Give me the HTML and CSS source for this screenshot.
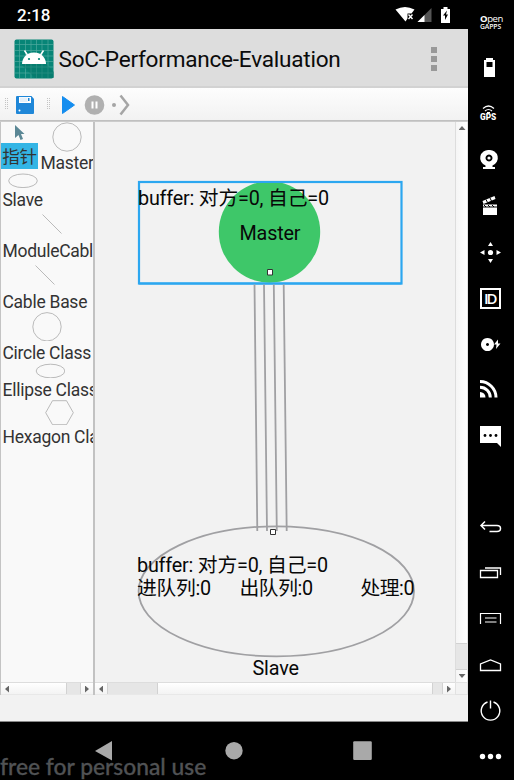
FILE: index.html
```html
<!DOCTYPE html>
<html lang="zh-CN">
<head>
<meta charset="utf-8">
<title>SoC-Performance-Evaluation</title>
<link rel="stylesheet" href="styles.css">
</head>
<body>
<div class="emulator">
  <div class="screen">
    <div class="status">
      <span class="clock">2:18</span>
      <svg class="status-icons" width="60" height="20" viewBox="394 5 60 20">
        <path d="M395.500 9.500q9.500-5 19 0l-3 4h-4v5l-2 3z" fill="#fff"/>
        <path d="M408.500 14.500l4 4.500m0-4.500l-4 4.500" stroke="#fff" stroke-width="1.400"/>
        <path d="M431.500 8v14h-14z" fill="#555"/>
        <path d="M424.500 15v7h-7z" fill="#fff"/>
        <path d="M441 9h2.500V7h4v2h2.500v14h-9z" fill="#fff"/>
        <path d="M447 10.500l-4 5h2v4.500l3-5.500h-2z" fill="#000"/>
      </svg>
    </div>

    <header class="appbar">
      <svg class="app-icon" width="40" height="40" viewBox="0 0 40 40">
        <rect x=".5" y=".5" width="39" height="39" rx="2" fill="#078577"/>
        <path d="M5.500 1v38M11.500 1v38M17 1v38M22.500 1v38M28 1v38M34 1v38M1 5.500h38M1 11.500h38M1 17h38M1 22.500h38M1 28h38M1 34h38" stroke="#4fa99e" stroke-width=".7"/>
        <path d="M8 26L13 18l19 6v1l8 8v6H21z" fill="#067568" opacity=".5"/>
        <path d="M8 25c0-5.500 4-11.500 12-11.500S32 19.500 32 25z" fill="#fff"/>
        <path d="M13.500 16l-3-4.500m16 4.500l3-4.500" stroke="#fff" stroke-width="1.500"/>
        <circle cx="15" cy="20" r="1.100" fill="#078577"/><circle cx="25" cy="20" r="1.100" fill="#078577"/>
      </svg>
      <h1 class="title">SoC-Performance-Evaluation</h1>
      <div class="overflow"><i></i><i></i><i></i></div>
    </header>

    <div class="toolbar">
      <svg width="140" height="32" viewBox="0 89 140 32">
        <path d="M5.500 99v11M7.500 99v11M47.500 99v11M49.500 99v11" stroke="#c4c4c4" stroke-dasharray="1 1"/>
        <path d="M17 97h14.500l2.500 3v14a1 1 0 0 1-1 1H17a1 1 0 0 1-1-1V98a1 1 0 0 1 1-1z" fill="#1f87d8"/>
        <path d="M19 98h12v6H19z" fill="#fff"/><path d="M20 98.500h7.500V103H20z" fill="#e4f0fa"/><path d="M28 99h1.500v3H28z" fill="#1f87d8"/>
        <circle cx="19.500" cy="111.500" r="1" fill="#fff"/>
        <path d="M62.500 97.500l12 8.500-12 8.500z" fill="#148def" stroke="#148def" stroke-linejoin="round"/>
        <circle cx="94.500" cy="106" r="9.800" fill="#b0b0b0"/>
        <path d="M92.500 102.500v7M96.500 102.500v7" stroke="#fff" stroke-width="2"/>
        <circle cx="114" cy="106" r="2" fill="#a5a5a5"/>
        <path d="M120.500 96.500l7.500 9.500-7.500 9.500" fill="none" stroke="#a5a5a5" stroke-width="2.500"/>
      </svg>
    </div>

    <main class="workspace">
      <section class="palette">
        <div class="items">
          <div class="row">
            <div class="item pointer">
              <svg width="12" height="17" viewBox="0 0 12 17"><path d="M1 1l9.500 9H7l2 5-2.500 1-2-5L1 14z" fill="#5b8795"/></svg>
              <span class="label selected">指针</span>
            </div>
            <div class="item master">
              <svg width="30" height="30" viewBox="0 0 30 30"><circle cx="15" cy="15" r="14.200"/></svg>
              <span class="label">Master</span>
            </div>
          </div>
          <div class="item"><svg width="30" height="15" viewBox="0 0 30 15"><ellipse cx="15" cy="7.800" rx="14.300" ry="6.800"/></svg><span class="label">Slave</span></div>
          <div class="item"><svg width="30" height="29" viewBox="0 0 30 29"><path d="M5.500 4.500l19 19"/></svg><span class="label">ModuleCable</span></div>
          <div class="item"><svg width="30" height="29" viewBox="0 0 30 29"><path d="M5.500 4.500l19 19"/></svg><span class="label">Cable Base</span></div>
          <div class="item"><svg width="30" height="29" viewBox="0 0 30 29"><circle cx="15" cy="14.800" r="14.200"/></svg><span class="label">Circle Class</span></div>
          <div class="item"><svg width="30" height="15" viewBox="0 0 30 15"><ellipse cx="15.500" cy="8" rx="14.300" ry="6.800"/></svg><span class="label">Ellipse Class</span></div>
          <div class="item"><svg width="30" height="25" viewBox="0 0 30 25"><path d="M1.700 12.700L8.500 .700h14l6.800 12-6.800 12H8.500z"/></svg><span class="label">Hexagon Class</span></div>
        </div>
        <div class="hbar">
          <span class="arrow left"></span><span class="track"></span><span class="thumb small"></span><span class="arrow right"></span>
        </div>
      </section>

      <section class="editor">
        <svg class="diagram" width="360" height="560" viewBox="95 122 360 560">
          <rect x="139" y="182" width="262.500" height="101.500" fill="none" stroke="#2ca7f0" stroke-width="2.200"/>
          <circle cx="269.500" cy="232" r="50.700" fill="#3ec769"/>
          <path d="M139 283.500h262.500M139 182h262.500" stroke="#2ca7f0" stroke-width="2.200"/>
          <g stroke="#a0a0a3" stroke-width="1.800" fill="none">
            <path d="M254.500 284.500L257.300 531M264 284.500l3 246.500M273.800 284.500l3 246.500M283.700 284.500l3 246.500"/>
            <ellipse cx="276.300" cy="591.300" rx="137.700" ry="65"/>
          </g>
          <path d="M267.500 269.500h5v5.500h-5zM270.500 529.500h5v5h-5z" fill="#fff" stroke="#333"/>
          <text x="138" y="204.500" textLength="191">buffer: 对方=0, 自己=0</text>
          <text x="239.500" y="240" textLength="61">Master</text>
          <text x="137" y="572" textLength="191">buffer: 对方=0, 自己=0</text>
          <text x="137" y="595" textLength="74">进队列:0</text>
          <text x="239.500" y="595" textLength="73.500">出队列:0</text>
          <text x="360.500" y="595" textLength="54">处理:0</text>
          <text x="252.500" y="675" textLength="46.500">Slave</text>
        </svg>
        <div class="vbar">
          <span class="arrow up"></span><span class="track"></span><span class="thumb"></span><span class="arrow down"></span>
        </div>
        <div class="hbar">
          <span class="arrow left"></span><span class="thumb wide"></span><span class="track"></span><span class="thumb tiny"></span><span class="arrow right"></span>
        </div>
        <div class="corner"></div>
      </section>
    </main>

    <div class="footer"></div>

    <nav class="navbar">
      <svg width="468" height="58" viewBox="0 722 468 58">
        <path d="M112 741v19.500L95 751z" fill="#a9a9a9"/>
        <circle cx="234" cy="750.700" r="8.700" fill="#a9a9a9"/>
        <rect x="353.200" y="741.300" width="18.600" height="18.600" rx="1.200" fill="#a9a9a9"/>
      </svg>
      <span class="watermark">free for personal use</span>
    </nav>
  </div>

  <aside class="side">
    <svg width="46" height="780" viewBox="468 0 46 780">
      <g fill="#fff">
        <text class="open" x="480" y="22"><tspan font-weight="700">O</tspan>pen</text>
        <text class="gapps" x="480" y="29">GAPPS</text>
        <path d="M484 60h2v-2h7v2h2v17h-11zM486.500 62v5h6v-5z" fill-rule="evenodd"/>
        <text class="gps" x="480" y="120">GPS</text>
        <path d="M489 150a8 8 0 0 1 3.500 15.500v1.500h2.500v2h-12v-2h2.500v-1.500A8 8 0 0 1 489 150zm0 4.500a3.500 3.500 0 1 0 .01 0z" fill-rule="evenodd"/>
        <circle cx="489" cy="158" r="1.600"/>
        <path d="M483 204.500h14V215h-14zM482.500 201l12-5 1 3-12 5z"/>
        <circle cx="490.500" cy="252.500" r="2.600"/>
        <path d="M490.500 242l2.500 4h-5zM490.500 263l2.500-4h-5zM480 252.500l4.500-2.500v5zM501 252.500l-4.500-2.500v5z"/>
        <text class="id" x="484" y="303.500">ID</text>
        <path d="M487.500 338a6.500 6.500 0 1 1-.01 0zm0 5a1.500 1.500 0 1 0 .01 0z" fill-rule="evenodd"/>
        <path d="M498 339.500l-4 5h2.500l-.5 4.500 4.500-5.500H498z"/>
        <path d="M480 392a5.500 5.500 0 0 1 5.500 5.500H480z"/>
        <path d="M480 426h21v21l-4-4h-17z"/>
        <circle cx="482.500" cy="756.500" r="2.700"/><circle cx="490.500" cy="756.500" r="2.700"/><circle cx="498.500" cy="756.500" r="2.700"/>
      </g>
      <g fill="#000">
        <circle cx="485" cy="435.500" r="1.400"/><circle cx="490.500" cy="435.500" r="1.400"/><circle cx="496" cy="435.500" r="1.400"/>
        <path d="M483 206.500h14v1h-14z"/>
      </g>
      <path d="M484 205l2 2m2-2l2 2m2-2l2 2M486 199.500l1.500 3M490 198l1.500 3" stroke="#000" fill="none"/>
      <g fill="none" stroke="#fff">
        <path d="M483 108.500q5.500-5 11 0M485 111q3.500-3 7 0" stroke-width="1.200"/><path d="M487 112.500h3"/>
        <rect x="481" y="289" width="19" height="19" stroke-width="2"/>
        <path d="M480 387.200a10.300 10.300 0 0 1 10.300 10.300M480 381.500a16 16 0 0 1 16 16" stroke-width="3"/>
        <path d="M485 521.500l-4 4 4 4M481 525.500h16q3.500 0 3.500 3t-3.500 3h-7.500" stroke-width="1.500"/>
        <path d="M480.500 570.500h17v7h-17zM485 568h15.500v7" stroke-width="1.300"/>
        <path d="M480.500 624v-10.500h20V624M485 618h11.500M485 622h11.500" stroke-width="1.200"/>
        <path d="M480.500 670.500v-6.500l10-4 10 4v6.500z" stroke-width="1.300"/>
        <path d="M487.500 702a9.300 9.300 0 1 0 6 0M490.500 700.500v8" stroke-width="1.400"/>
      </g>
    </svg>
  </aside>
</div>
</body>
</html>
```
FILE: styles.css
```css
* { box-sizing: border-box; }

body {
  margin: 0;
  background: #000;
  font-family: Roboto, "Noto Sans CJK SC", sans-serif;
}

svg { display: block; flex: none; }

.emulator {
  display: grid;
  grid-template-columns: 468px 46px;
  width: 514px;
  height: 780px;
  overflow: hidden;
}

.screen {
  display: grid;
  grid-template-rows: 29px 59px 33px 574px 27px 58px;
  min-width: 0;
}

.status {
  display: flex;
  align-items: center;
  justify-content: space-between;
  padding: 1px 14px 0 17px;
  color: #fff;
  background: #000;
}
.clock { font-size: 17px; font-weight: 500; line-height: 20px; }

.appbar {
  display: flex;
  align-items: center;
  padding: 0 31px 0 14px;
  background: #ddd;
  border-bottom: 2px solid #d2d2d2;
}
.app-icon { margin-top: 2px; }
.title {
  flex: 1;
  margin: 4px 0 0 4.5px;
  font-size: 22.6px;
  font-weight: 400;
  line-height: 28px;
  letter-spacing: -.24px;
  white-space: nowrap;
  color: #0b0b0b;
}
.overflow { display: grid; gap: 3px; margin-top: 2px; }
.overflow i { width: 6px; height: 6px; background: #999; }

.toolbar {
  background: linear-gradient(#fdfdfd, #f2f2f2);
  border-bottom: 1px solid #c0c0c0;
}

.workspace {
  display: grid;
  grid-template-columns: 95px 373px;
  border-top: 1px solid #ccc;
  background: #f2f2f2;
}

.palette {
  display: grid;
  grid-template-rows: 560px 13px;
  min-width: 0;
  border-left: 1px solid #c4c4c4;
  border-right: 2px solid #c2c2c2;
  overflow: hidden;
  background: #f9f9f9;
}
.items {
  display: flex;
  flex-direction: column;
  align-items: flex-start;
  min-width: 0;
  overflow: hidden;
}
.items svg { fill: none; stroke: #aaa; stroke-width: .8; }
.row { display: flex; height: 51px; }
.item {
  display: flex;
  flex: none;
  flex-direction: column;
  align-items: center;
  padding-left: 1.5px;
}
.label {
  height: 22px;
  font-size: 17.5px;
  line-height: 25px;
  letter-spacing: -.27px;
  white-space: nowrap;
  color: #333;
}
.pointer { width: 37px; padding: 2px 0 0; }
.pointer svg { stroke: none; margin-bottom: 2px; }
.selected {
  width: 37px;
  height: 26px;
  line-height: 28px;
  text-align: center;
  background: #33b5e5;
}
.master { margin-left: 1px; }
.master .label { line-height: 23px; }

.editor {
  display: grid;
  grid-template-columns: 360px 13px;
  grid-template-rows: 560px 13px;
}
.diagram text { font-size: 19.8px; fill: #080808; white-space: pre; }

.hbar, .vbar { display: flex; }
.hbar {
  background: linear-gradient(#fff, #f3f3f3);
  border-top: 1px solid #ddd;
  border-bottom: 1px solid #e8e8e8;
}
.vbar {
  flex-direction: column;
  background: linear-gradient(90deg, #f5f5f5, #fff);
  border-left: 1px solid #ddd;
  border-right: 1px solid #e4e4e4;
}
.track { flex: 1; }
.thumb { background: #e6e6e6; border: 0 solid #d2d2d2; }
.hbar .thumb { border-width: 0 1px; }
.vbar .thumb { height: 27px; border-width: 1px 0; }
.small { width: 15px; }
.wide { width: 51px; }
.tiny { width: 11px; }
.arrow { display: flex; flex: none; width: 12px; height: 12px; align-items: center; justify-content: center; }
.arrow::before { content: ""; width: 4px; height: 7px; background: #666; }
.arrow.left::before { clip-path: polygon(100% 0, 100% 100%, 0 50%); }
.arrow.right::before { clip-path: polygon(0 0, 100% 50%, 0 100%); }
.arrow.up::before { width: 7px; height: 4px; clip-path: polygon(50% 0, 100% 100%, 0 100%); }
.arrow.down::before { width: 7px; height: 4px; clip-path: polygon(0 0, 100% 0, 50% 100%); }
.corner { border: 1px solid #e2e2e2; }

.footer { background: #f2f2f2; border-bottom: 1px solid #888; }

.navbar { position: relative; background: #000; }
.watermark {
  position: absolute;
  left: 0;
  bottom: -1px;
  font-family: Lato, sans-serif;
  font-size: 22.8px;
  font-weight: 500;
  line-height: 30px;
  white-space: nowrap;
  color: #505254;
  -webkit-text-stroke: .3px #505254;
}

.side { background: #000; }
.open { font: 9.5px "Open Sans", sans-serif; letter-spacing: -.4px; }
.gapps { font: 600 6.8px "Open Sans", sans-serif; letter-spacing: -.1px; }
.gps { font: 900 8.3px Roboto, sans-serif; }
.id { font: 600 15px "Open Sans", sans-serif; letter-spacing: -2px; }
```
